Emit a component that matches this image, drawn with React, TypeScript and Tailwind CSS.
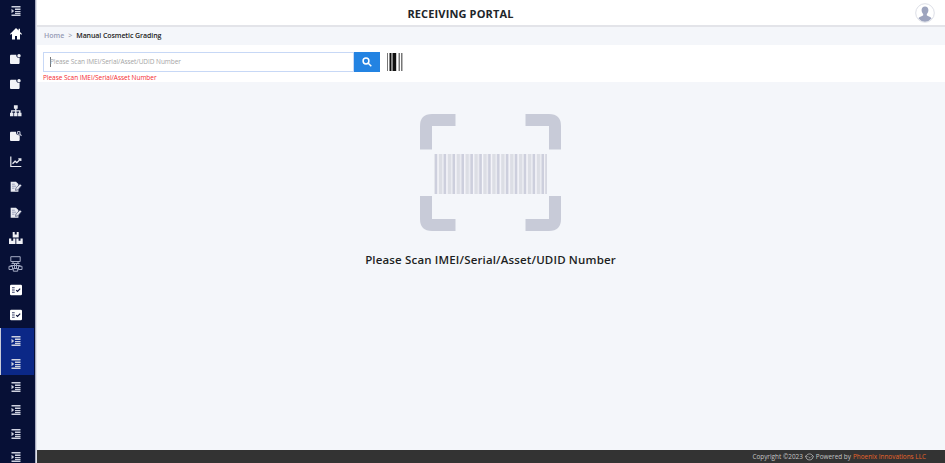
import React from "react";

type IconName = "home" | "note" | "noteSearch" | "sitemap" | "chart" | "edit" | "boxes" | "network" | "check";

function Indent() {
  return (
    <svg className="ml-px" width="10" height="10" viewBox="0 0 10 10" fill="#ced1df">
      <path d="M.5 0h9v1.400H.5zM4 2.500h5.500v1.400H4zM4 4.900h5.500v1.400H4zM4 7h5.500v.9H4zM.5 8.500h9V10h-9zM.5 2.700 3.200 5 .5 7.300z" />
    </svg>
  );
}

function Icon({ name }: { name: IconName }) {
  switch (name) {
    case "home":
      return (
        <svg width="12" height="12" viewBox="0 0 12 12" fill="#fff">
          <path d="M6 0 0 6l.7.8L2 5.8V11.5h3V8h2v3.500h3V5.800l1.300 1L12 6 10 4V.8H8.600v1.800z" />
        </svg>
      );
    case "note":
      return (
        <svg width="11" height="11" viewBox="0 0 11 11" fill="#f2f3f7">
          <path d="M1.300.7h5c-.3 2 1 3.500 3.300 3.300v4.700c0 .8-.5 1.300-1.300 1.300h-7C.5 10 0 9.500 0 8.700V2C0 1.200.5.7 1.300.7z" />
          <circle cx="9" cy="1.800" r="1.700" />
        </svg>
      );
    case "noteSearch":
      return (
        <svg width="12" height="11" viewBox="0 0 12 11" fill="#f2f3f7">
          <path d="M1.300.7H6c-.3 2 1 3.800 3.700 3.500v4.500c0 .8-.5 1.300-1.300 1.300H1.300C.5 10 0 9.500 0 8.700V2C0 1.200.5.7 1.300.7z" />
          <circle cx="8.700" cy="1.900" r="1.400" fill="none" stroke="#bcc0d3" strokeWidth="1.100" />
          <path d="m9.700 2.900 1.800 1.900" stroke="#bcc0d3" strokeWidth="1.200" />
        </svg>
      );
    case "sitemap":
      return (
        <svg width="12" height="12" viewBox="0 0 12 12" fill="#e8eaf1">
          <path d="M3.900.3h3.800v3.500H6.500v1.500h4V7.800h1v3.400H8.100V7.800h1V6.500H6.500v1.300h1v3.400H4.100V7.800h1V6.500H2.300v1.300h1.100v3.400H0V7.800h1.100V5.300h4V3.800H3.900z" />
        </svg>
      );
    case "chart":
      return (
        <svg width="12" height="12" viewBox="0 0 12 12" fill="none" stroke="#e8eaf1">
          <path d="M.8.500v10h10.500" strokeWidth="1.200" />
          <path d="m2.500 7.800 2.600-2.600 1.700 1.400L10.500 3M8.300 2.800h2.500v2.300" strokeWidth="1.300" />
        </svg>
      );
    case "edit":
      return (
        <svg width="12" height="12" viewBox="0 0 12 12">
          <path d="M.7.800H6L8.400 3v7.800H.7z" fill="#e8eaf1" />
          <path d="M2 3.200h2.800M2 5.200h4M2 7.200h2.500" stroke="#7a81a3" strokeWidth=".7" />
          <path d="m5.500 9.400.5-2.500 4-4 1.700 1.500-3.800 4.500z" fill="#e1e3eb" stroke="#2a3259" strokeWidth=".6" />
        </svg>
      );
    case "boxes":
      return (
        <svg width="14" height="13" viewBox="0 0 14 13" fill="#f0f1f6">
          <path d="M3.700 0h2v2.500h2V0h2v5.600h-6zM0 6.600h2.300v2.200h1.900V6.600h2.200v5.500H0zM7.300 6.600h2.300v2.200h1.900V6.600h2.200v5.500H7.300z" />
        </svg>
      );
    case "network":
      return (
        <svg width="15" height="16" viewBox="0 0 15 16" fill="none" stroke="#a4aac3" strokeWidth="1">
          <path d="M2.800.7h9.400v4.800H2.800zM3.500 7.500h8M5 5.500v2M10 5.500v2M6.500 7.500v5M8.500 7.500v5M2.500 9.500h10M1 10.300h3.500v3.200H1zM10.500 10.300H14v3.200h-3.500zM5.300 12.500h4.400v2.700H5.300z" />
        </svg>
      );
    case "check":
      return (
        <svg width="12" height="12" viewBox="0 0 12 12">
          <rect y=".7" width="12" height="10.600" rx="1.200" fill="#fff" />
          <path d="M2 3.700h2.700M2 6h2.700M2 8.300h2.700" stroke="#3b426b" strokeWidth="1.100" />
          <path d="m6.200 6.100 1.300 1.200 2.700-2.700" fill="none" stroke="#0a1038" strokeWidth="1.200" />
        </svg>
      );
  }
}

const menu: IconName[] = ["home", "note", "note", "sitemap", "noteSearch", "chart", "edit", "edit", "boxes", "network", "check", "check"];

function Sidebar() {
  return (
    <nav className="flex w-[37px] shrink-0 flex-col overflow-hidden border-r border-[#e0e2ea] bg-[#071036]">
      <div className="flex min-h-0 flex-1 flex-col border-r border-[#a9acbf]">
        <div className="flex h-[21px] w-[31px] shrink-0 items-center justify-center"><Indent /></div>
        {menu.map((name, i) => (
          <div key={i} className="flex h-[25.6px] w-[31px] shrink-0 items-center justify-center"><Icon name={name} /></div>
        ))}
        <div className="w-[34px] shrink-0 border-l border-[#c8cbd8] bg-[#0b2887]">
          {[0, 1].map((i) => (
            <div key={i} className="flex h-[23.4px] w-[29px] items-center justify-center pt-[2px]"><Indent /></div>
          ))}
        </div>
        {[0, 1, 2, 3].map((i) => (
          <div key={i} className="flex h-[23.4px] w-[31px] shrink-0 items-center justify-center pt-px"><Indent /></div>
        ))}
      </div>
    </nav>
  );
}

function Avatar() {
  return (
    <svg width="20" height="20" viewBox="0 0 20 20">
      <circle cx="10" cy="10" r="9.300" fill="#fff" stroke="#d3d6df" strokeWidth=".8" />
      <path d="M10 3.500c2.200 0 3.400 1.500 3.400 3.600 0 1.700-.6 3-1.600 3.900v1.200c0 .8 4 1.200 4.700 3.300A9 9 0 0 1 10 18.800a9 9 0 0 1-6.500-3.300c.7-2.100 4.700-2.500 4.700-3.300V11c-1-.9-1.600-2.200-1.600-3.900C6.600 5 7.800 3.500 10 3.500z" fill="#9da4be" />
    </svg>
  );
}

function ScanGraphic() {
  return (
    <svg width="141" height="117" viewBox="0 0 141 117">
      <path d="M35.500 0H12Q0 0 0 12v23.500h12V12h23.500zM105.500 0H129q12 0 12 12v23.500h-12V12h-23.500zM0 82v23q0 12 12 12h23.500v-12H12V82zM141 82v23q0 12-12 12h-23.500v-12H129V82z" fill="#c8cbd8" />
      <rect x="14" y="40" width="113" height="40" fill="#eaebf1" />
      {Array.from({ length: 13 }, (_, i) => (
        <g key={i}>
          <rect x={14.800 + i * 8.900} y="40" width="2.500" height="40" fill="#cdcfdd" />
          {i < 12 && <rect x={19 + i * 8.900} y="40" width="3" height="40" fill="#dcdee5" />}
          <rect x={17.500 + i * 8.900} y="40" width="1" height="40" fill="#f5f6fa" />
        </g>
      ))}
      <rect x="125.200" y="40" width="1.800" height="40" fill="#d6d8e2" />
    </svg>
  );
}

export default function App() {
  return (
    <div className="flex h-[463px] w-[945px] overflow-hidden bg-[#f4f6fa] font-['Open_Sans',sans-serif] text-[#212529]">
      <Sidebar />
      <div className="flex min-w-0 flex-1 flex-col">
        <header className="flex h-[27px] shrink-0 items-center border-b-2 border-[#e3e4e9] bg-white pr-[10px]">
          <h1 className="flex-1 pt-[2px] pr-[31px] text-center text-[11px] leading-none font-bold tracking-[0.140px] whitespace-nowrap">RECEIVING PORTAL</h1>
          <Avatar />
        </header>
        <div className="flex h-[18px] shrink-0 items-center pb-[2px] pl-[7px] text-[7px] leading-none whitespace-nowrap">
          <span className="font-semibold text-[#959bb5]">Home</span>
          <span className="mx-[4px] text-[#858aa0]">&gt;</span>
          <span className="font-semibold tracking-[-0.080px] text-[#222]">Manual Cosmetic Grading</span>
        </div>
        <section className="h-[37px] shrink-0 bg-white pt-[7px] pl-[6px]">
          <div className="flex h-[20px] items-center">
            <div className="flex h-[20px] w-[311px] items-center border border-[#c7d8f6] pl-[6px] text-[6.500px] text-[#a5a5a5]">
              <span className="-mr-px h-[10px] w-px bg-[#777]" />
              <span className="pt-px leading-none tracking-[-0.060px] whitespace-nowrap">Please Scan IMEI/Serial/Asset/UDID Number</span>
            </div>
            <button className="flex h-[20px] w-[26px] items-center justify-center bg-[#2383e2]">
              <svg width="10" height="10" viewBox="0 0 10 10" fill="none" stroke="#fff" strokeWidth="1.500"><circle cx="4" cy="4" r="2.900" /><path d="m6.300 6.300 3 3" /></svg>
            </button>
            <svg className="ml-[7px]" width="16" height="18" viewBox="0 0 16 18">
              <path d="M0 0h1v18H0zM11.500 0h1.500v18h-1.500zM14 0h1.500v18H14z" fill="#777" />
              <path d="M2.500 0h2v18h-2zM5.500 0h3.700v18H5.500z" fill="#111" />
            </svg>
          </div>
          <p className="mt-[2px] text-[6.500px] leading-[8px] tracking-[-0.040px] text-[#f52a30]">Please Scan IMEI/Serial/Asset Number</p>
        </section>
        <main className="flex flex-1 flex-col items-center pt-[32px] pr-px">
          <ScanGraphic />
          <p className="mt-[21px] text-[11.500px] leading-[16px] font-semibold tracking-[0.160px] whitespace-nowrap text-[#1d1f23]">Please Scan IMEI/Serial/Asset/UDID Number</p>
        </main>
        <footer className="flex h-[13px] shrink-0 items-center justify-end bg-[#333] pt-px pr-[19px] text-[6.400px] leading-none whitespace-nowrap text-[#c5c5c5]">
          <span>Copyright ©2023</span>
          <svg className="mx-[2px]" width="9" height="8" viewBox="0 0 10 8" fill="none" stroke="#bbb" strokeWidth=".9"><path d="M1.500 2.500C3 0 7 0 8.500 2.500M1 3.500c0 5 8 5 8 0M.3 4l1-1.500L2.800 4M7.200 3.500 8.500 2.300l1 1.500M4 4l1 1 1-1" /></svg>
          <span>Powered by</span>
          <span className="ml-[2px] text-[#e8652a]">Phoenix Innovations LLC</span>
        </footer>
      </div>
    </div>
  );
}
